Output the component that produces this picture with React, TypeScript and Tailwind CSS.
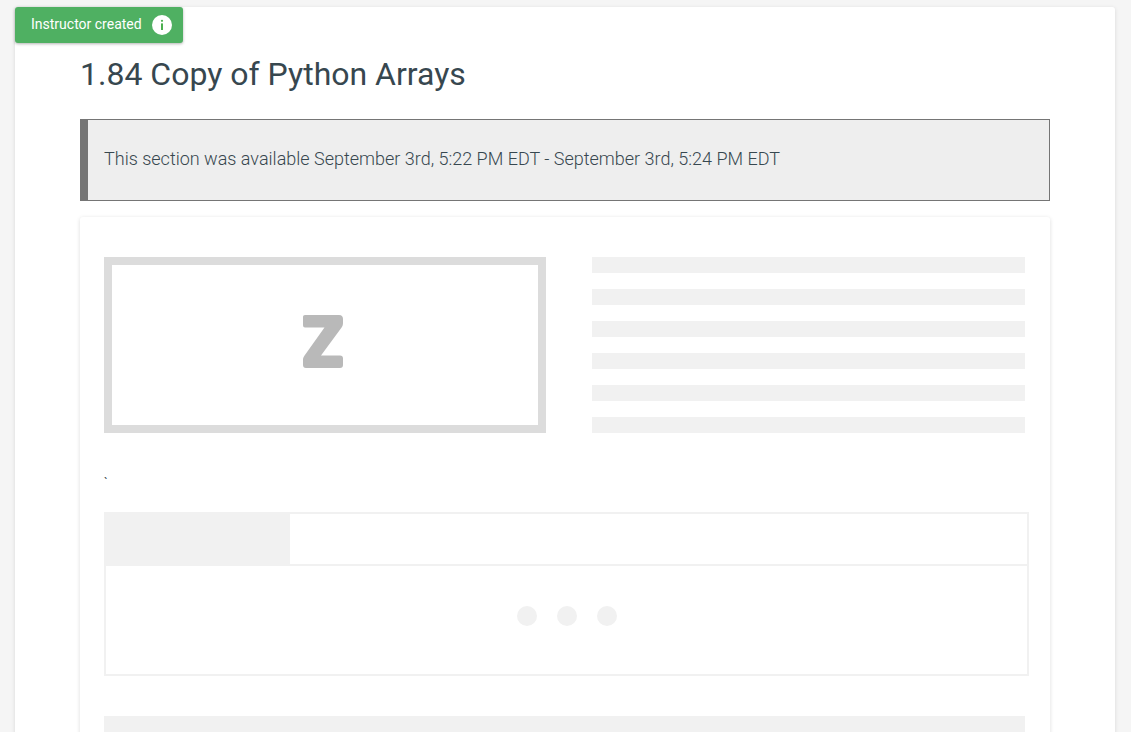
import React from "react";

const skeletonLines = [0, 1, 2, 3, 4, 5];
const dots = [0, 1, 2];

const InfoIcon = () => (
  <svg width="20" height="20" viewBox="0 0 20 20" aria-hidden="true">
    <circle cx="10" cy="10" r="10" fill="#ffffff" />
    <circle cx="10" cy="5.8" r="1.1" fill="#4caf50" />
    <rect x="9" y="8.4" width="2" height="6.6" fill="#4caf50" />
  </svg>
);

const ZLogo = () => (
  <svg width="40" height="53" viewBox="0 0 40 53" aria-hidden="true">
    <path
      d="M2 0H36C39 0 40 2 40 4V8C40 10 39.5 11 38.6 12.4L18 40.5H37C39 40.5 40 41.5 40 43.5V50C40 52 39 53 37 53H3C1 53 0 52 0 50V45C0 43 .5 42 1.4 40.7L21.5 12.5H2C.8 12.5 0 11.7 0 10V2C0 .8 .8 0 2 0Z"
      fill="#b9b9b9"
    />
  </svg>
);

const App: React.FC = () => {
  return (
    <div className="h-screen overflow-hidden bg-[#f5f5f5] pl-[15px] pr-[16px] pt-[7px] font-['Roboto',sans-serif]">
      <div className="relative h-[800px] rounded-t-[3px] bg-white px-[65px] shadow-[0_1px_4px_rgba(0,0,0,0.12)]">
        <div className="absolute left-0 top-0 flex h-9 w-[168px] items-center rounded-[3px] bg-[#4fb062] pb-[3px] pl-4 text-sm text-white shadow-[0_1px_3px_rgba(0,0,0,0.3)]">
          <span>Instructor created</span>
          <span className="ml-[10px] mt-[3px]">
            <InfoIcon />
          </span>
        </div>

        <h1 className="pt-[47px] text-[32px] leading-[40px] font-normal text-[#37474f]">
          1.84 Copy of Python Arrays
        </h1>

        <div className="mt-[25px] flex h-[82px] items-center border border-l-[8px] border-[#757575] bg-[#eeeeee] pb-[3px] pl-4 text-lg font-light text-[#37474f]">
          This section was available September 3rd, 5:22 PM EDT - September 3rd, 5:24 PM EDT
        </div>

        <div className="mt-4 rounded-[3px] bg-white pl-6 pr-[25px] pt-10 shadow-[0_1px_4px_rgba(0,0,0,0.14)]">
          <div className="flex items-start gap-[46px]">
            <div className="flex h-[176px] w-[442px] items-center justify-center border-[8px] border-[#dcdcdc]">
              <span className="-ml-[4px] -mt-[8px] flex">
                <ZLogo />
              </span>
            </div>
            <div className="flex flex-1 flex-col gap-4">
              {skeletonLines.map((line) => (
                <div key={line} className="h-4 bg-[#f1f1f1]" />
              ))}
            </div>
          </div>

          <p className="mt-10 h-[39px] text-xs leading-5 text-[#37474f]">`</p>

          <div className="-mr-1 border-2 border-[#f1f1f1]">
            <div className="h-[50px] w-[184px] bg-[#f1f1f1]" />
            <div className="flex h-[110px] items-center justify-center gap-5 border-t-2 border-[#f1f1f1] pb-2">
              {dots.map((dot) => (
                <div key={dot} className="h-5 w-5 rounded-full bg-[#f1f1f1]" />
              ))}
            </div>
          </div>

          <div className="mt-10 h-10 bg-[#f1f1f1]" />
        </div>
      </div>
    </div>
  );
};

export default App;
